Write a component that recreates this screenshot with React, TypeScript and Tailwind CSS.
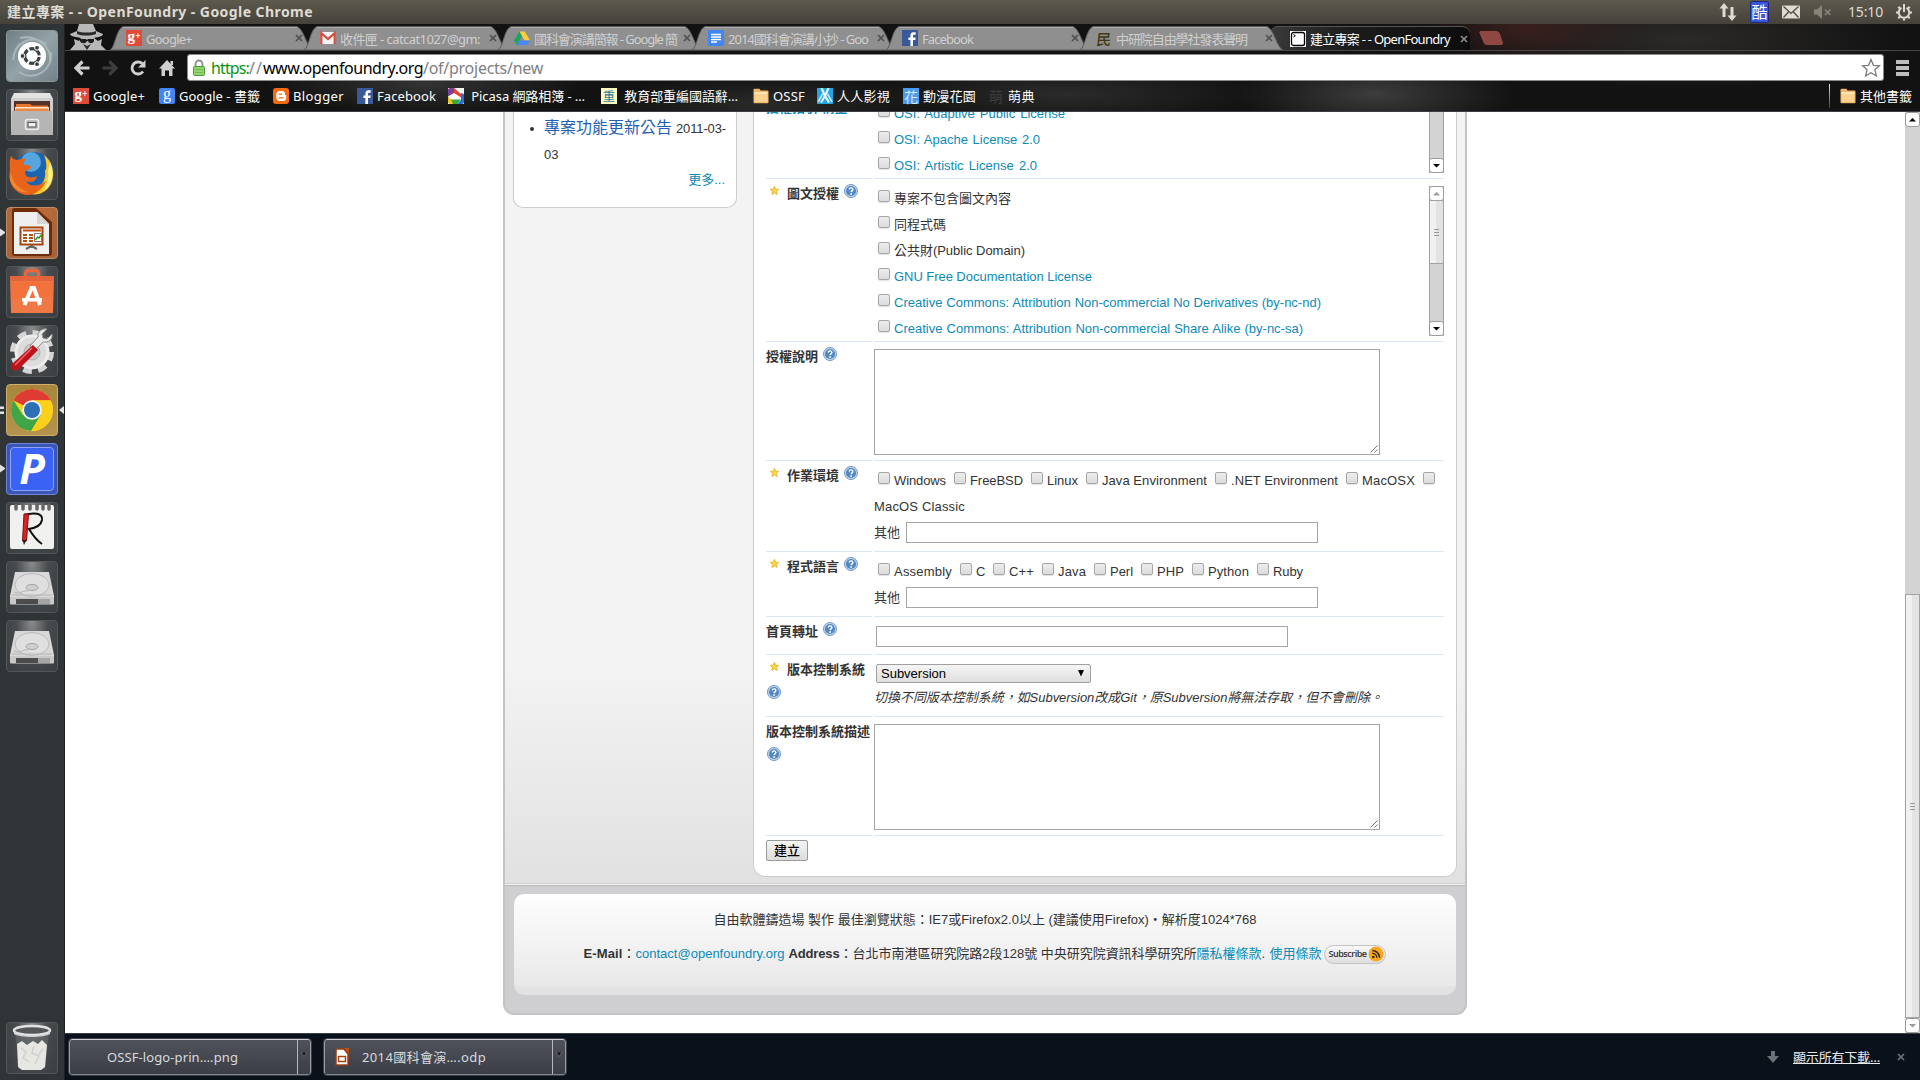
import { useLayoutEffect, useRef, type ReactNode } from 'react'

/* Text run tracked so that it fills a fixed measure. */
function Fit({ w, className = '', words = false, children }: { w: number; className?: string; words?: boolean; children: string }) {
  const ref = useRef<HTMLSpanElement>(null)
  useLayoutEffect(() => {
    const el = ref.current
    if (!el) return
    el.style.letterSpacing = '0px'
    el.style.wordSpacing = '0px'
    const diff = w - el.getBoundingClientRect().width
    const spaces = children.split(' ').length - 1
    if (words && spaces > 0) el.style.wordSpacing = `${diff / spaces}px`
    else el.style.letterSpacing = `${diff / children.length}px`
  }, [w, words, children])
  return (
    <span ref={ref} className={`inline-block whitespace-pre ${className}`}>
      {children}
    </span>
  )
}

/* ---------- small icons ---------- */

const GPlus = () => (
  <span className="flex h-4 w-4 shrink-0 items-center justify-center bg-[#dd4b39] font-['Liberation_Serif',serif] text-[15px] leading-none font-bold text-white">
    <span className="-mt-1">g</span>
    <span className="-mt-1 text-[10px]">+</span>
  </span>
)
const GBlue = () => (
  <span className="flex h-4 w-4 shrink-0 items-center justify-center rounded-[2px] bg-[#4285f4] font-['Liberation_Serif',serif] text-[16px] leading-none text-white">
    <span className="-mt-1">g</span>
  </span>
)
const Gmail = () => (
  <svg viewBox="0 0 16 16" className="h-4 w-4 shrink-0">
    <rect x="0.5" y="2" width="15" height="12" rx="1" fill="#f4f4f4" />
    <path d="M1.3 14V3.2L8 9l6.7-5.8V14" fill="none" stroke="#d54b3d" strokeWidth="2.2" />
  </svg>
)
const Drive = () => (
  <svg viewBox="0 0 16 16" className="h-4 w-4 shrink-0">
    <path d="M5.3 1.5h5.4L16 10.5h-5.4z" fill="#ffcf3f" />
    <path d="M5.3 1.5L8 6 2.7 15 0 10.5z" fill="#1da362" />
    <path d="M5.4 10.5H16L13.3 15H2.7z" fill="#4688f4" />
  </svg>
)
const Docs = () => (
  <svg viewBox="0 0 16 16" className="h-4 w-4 shrink-0">
    <rect width="16" height="16" rx="1" fill="#4285f4" />
    <path d="M3 4.5h10M3 7h10M3 9.500h10M3 12h6" stroke="#fff" strokeWidth="1.3" />
  </svg>
)
const Fb = () => (
  <svg viewBox="0 0 16 16" className="h-4 w-4 shrink-0">
    <rect width="16" height="16" fill="#3b5998" />
    <path d="M11 16V10h2.300l.4-2.500H11V6c0-.9.4-1.300 1.300-1.300h1.400V2.300h-2C9.500 2.300 8.400 3.500 8.400 5.600v1.900H6.400V10h2v6z" fill="#fff" />
  </svg>
)
const Min = () => (
  <span className="flex h-4 w-4 shrink-0 -skew-x-6 items-center justify-center font-['Noto_Sans_CJK_TC',sans-serif] text-[15px] leading-none font-medium text-[#3f3a12]">民</span>
)
const Foundry = () => (
  <svg viewBox="0 0 16 16" className="h-4 w-4 shrink-0">
    <rect width="16" height="16" fill="#fff" />
    <rect x="1.500" y="1.500" width="13" height="13" rx="2" fill="#fff" stroke="#000" strokeWidth="1.300" />
    <path d="M3.500 3.500l1.800 1.300L3.500 6" fill="none" stroke="#000" />
  </svg>
)
const Blogger = () => (
  <svg viewBox="0 0 16 16" className="h-4 w-4 shrink-0">
    <rect width="16" height="16" rx="3" fill="#f96a0e" />
    <path d="M6.300 3h3c1.500 0 2.700 1.200 2.700 2.700v.8c0 .5.400.7.9.7.300 0 .4.300.4.700v1.900c0 1.800-1.300 3.200-3 3.200h-4c-1.700 0-3-1.400-3-3.200V6.200C3.300 4.400 4.600 3 6.300 3z" fill="#fff" />
    <path d="M6.300 6.200h2.200M6.300 9.900h3.700" stroke="#f96a0e" strokeWidth="1.300" strokeLinecap="round" />
  </svg>
)
const Picasa = () => (
  <svg viewBox="0 0 16 16" className="h-4 w-4 shrink-0">
    <rect width="16" height="16" fill="#fff" />
    <path d="M6 0v5L0 8.500V2a2 2 0 012-2z" fill="#7d3f98" />
    <path d="M6 0l7 6v3.500L6 5z" fill="#e8432e" />
    <path d="M16 6v8a2 2 0 01-2 2H9.500L13 12V5z" fill="#2a6fd6" />
    <path d="M1.500 11.500H13L9.500 16H4z" fill="#3aa63f" />
    <path d="M0 8.500l3 3L5 16H2a2 2 0 01-2-2z" fill="#f6c21c" />
  </svg>
)
const Chong = () => (
  <span className="flex h-4 w-4 shrink-0 items-center justify-center bg-[#fbf8c4] font-['Noto_Sans_CJK_TC',sans-serif] text-[12px] leading-none text-[#1b7a9a]">重</span>
)
const Folder = () => (
  <svg viewBox="0 0 16 16" className="h-4 w-4 shrink-0">
    <path d="M0.500 1.800a1 1 0 011-1h5l1 1.700h7a1 1 0 011 1v10.700a1 1 0 01-1 1h-13a1 1 0 01-1-1z" fill="#f0b565" />
    <path d="M1.500 4h13v10.200h-13z" fill="#fbd28f" />
    <path d="M1.500 4h13v2h-13z" fill="#fde3b5" />
  </svg>
)
const Ren = () => (
  <svg viewBox="0 0 16 16" className="h-4 w-4 shrink-0">
    <rect width="16" height="16" fill="#23a5e0" />
    <path d="M4.500 0L8 8 4 14.500M11.500 0L8 8l4 6.500" fill="none" stroke="#e4f6ff" strokeWidth="2.200" />
    <path d="M5.500 6L1 14M10.500 6L15 14" fill="none" stroke="#bfe8fb" strokeWidth="1.600" />
  </svg>
)
const Hua = () => (
  <span className="flex h-4 w-4 shrink-0 items-center justify-center bg-[#4a9af0] font-['Noto_Sans_CJK_TC',sans-serif] text-[14px] leading-none text-[#d5ecff]">花</span>
)
const Meng = () => (
  <span className="flex h-4 w-4 shrink-0 items-center justify-center font-['Noto_Sans_CJK_TC',sans-serif] text-[14px] leading-none text-[#3d3d3d]">萌</span>
)

/* ---------- system bar ---------- */

function TitleBar() {
  return (
    <header className="flex h-6 w-full shrink-0 items-center bg-linear-to-b from-[#5d594d] to-[#44423b] pl-[7px] text-[#dfdbd2]">
      <Fit w={306} className="text-[14px] leading-6 font-bold">建立專案 - - OpenFoundry - Google Chrome</Fit>
      <div className="ml-auto flex h-6 items-center">
        <svg viewBox="0 0 18 20" className="h-5 w-[18px]" fill="#dfdbd2">
          <path d="M5 1l4.500 5.500h-3V15h-3V6.500h-3zM13 19l-4.500-5.500h3V5h3v8.500h3z" />
        </svg>
        <span className="ml-[13px] flex h-[22px] w-[19px] items-center justify-center rounded-[2px] border border-[#1c2b80] bg-[#3c55d6] text-[16px] leading-none text-white">酷</span>
        <svg viewBox="0 0 18 14" className="ml-[13px] h-[14px] w-[18px]">
          <rect y="0.500" width="18" height="13" rx="1" fill="#dfdbd2" />
          <path d="M1.500 1.500L9 8.500l7.500-7M1.500 12.500L6.500 7M16.500 12.500L11.500 7" fill="none" stroke="#4b483f" strokeWidth="1.200" />
        </svg>
        <svg viewBox="0 0 18 14" className="ml-[14px] h-[14px] w-[18px]">
          <path d="M0 4.500h3L8 0v14L3 9.500H0z" fill="#87847a" />
          <path d="M11 4.500l5.500 5.500M16.500 4.500L11 10" stroke="#87847a" strokeWidth="1.700" />
        </svg>
        <Fit w={35} className="ml-[16px] text-[14px] leading-6">15:10</Fit>
        <svg viewBox="0 0 18 18" className="mr-[7px] ml-[12px] h-[18px] w-[18px]" fill="none" stroke="#dfdbd2">
          <path d="M6.500 4.800a5.300 5.300 0 105 0" strokeWidth="2" />
          <path d="M9 1v8" strokeWidth="2" />
          <path d="M1 9.500h2M15 9.500h2M3.300 3.800l1.500 1.500M14.700 3.800l-1.500 1.500M3.300 15.200l1.500-1.500M14.700 15.200l-1.500-1.500M9 15.500v2" strokeWidth="2.200" />
        </svg>
      </div>
    </header>
  )
}

/* ---------- launcher ---------- */

const tileBase = 'relative flex h-[52px] w-[52px] shrink-0 items-center justify-center rounded-[4px] border overflow-hidden '
const tileDark = tileBase + 'border-[#545759] bg-[radial-gradient(ellipse_at_50%_0%,#8a8c8d_0%,#484b4d_45%,#3a3e40_100%)]'

function Disk() {
  return (
    <svg viewBox="0 0 52 52" className="h-[52px] w-[52px] shrink-0">
      <path d="M9 11h34l5 24v3H4v-3z" fill="#d8d8d8" />
      <path d="M4 36h44v6.500a1 1 0 01-1 1H5a1 1 0 01-1-1z" fill="#c9c9c9" />
      <path d="M10 38h32v5H10z" fill="#4c4c4c" />
      <path d="M32 38h12v5H32z" fill="#a5a5a5" />
      <ellipse cx="26" cy="24" rx="17" ry="11.500" fill="#dfdfdf" stroke="#b9b9b9" strokeWidth="1" />
      <ellipse cx="26" cy="26.500" rx="6" ry="3" fill="#cfcfcf" stroke="#a2a2a2" strokeWidth="1" />
      <path d="M8 31c6 3 8-2 14-1M6 34h40" fill="none" stroke="#b5b5b5" strokeWidth="1" />
    </svg>
  )
}

function Launcher() {
  return (
    <nav className="relative flex w-[65px] shrink-0 flex-col items-start gap-[7px] border-r border-[#1d2123] bg-[#2f3537] pt-[6px] pl-[6px]">
      <div className={tileBase + 'border-[#8b989c] bg-[linear-gradient(135deg,#6f7f86,#94a3a8_50%,#72828a)]'}>
        <svg viewBox="0 0 52 52" className="h-[52px] w-[52px] shrink-0" fill="none">
          <path d="M7 30C8 12 26 4 40 14M45 22c2 18-16 30-32 20M14 8c16-4 32 8 30 24" stroke="#a9b6ba" strokeWidth="2" />
          <circle cx="26" cy="26" r="14" fill="#fff" />
          <circle cx="26" cy="26" r="7.300" stroke="#3b4347" strokeWidth="3.200" strokeDasharray="13.300 2" strokeDashoffset="-1" />
          <circle cx="16.500" cy="26" r="2.400" fill="#3b4347" stroke="#fff" />
          <circle cx="31" cy="17.800" r="2.400" fill="#3b4347" stroke="#fff" />
          <circle cx="31" cy="34.200" r="2.400" fill="#3b4347" stroke="#fff" />
        </svg>
      </div>
      <div className={tileDark}>
        <svg viewBox="0 0 52 52" className="h-[52px] w-[52px] shrink-0">
          <path d="M8 4h36l3 6v8H5v-8z" fill="#e3e3e3" />
          <path d="M5 9h42v34H5z" fill="#cfcfcf" />
          <path d="M8 12h36v12H8z" fill="#51332a" />
          <path d="M10 15h14l2 1.500h16V22H10z" fill="#e8762d" />
          <path d="M9 18h34v4H9z" fill="#fbe3cd" />
          <path d="M9.500 19.500h33V23h-33z" fill="#ee8640" />
          <path d="M6 22h40l1 24H5z" fill="#b5b5b5" />
          <rect x="19.500" y="30.500" width="13" height="10" rx="2" fill="#b5b5b5" stroke="#ececec" strokeWidth="1.500" />
          <rect x="22" y="33.500" width="8" height="4.500" fill="#eee" stroke="#555" />
        </svg>
      </div>
      <div className={tileDark}>
        <svg viewBox="0 0 52 52" className="h-[52px] w-[52px] shrink-0">
          <circle cx="27" cy="25" r="21" fill="#1e63ae" />
          <circle cx="25" cy="14" r="10" fill="#55a5df" />
          <path d="M38 7c12 9 12 29 1 36-6 5-16 4-20 1 14-2 22-10 20-22 2 1 2-8-1-15z" fill="#f8c62d" />
          <path d="M44 14c5 12 2 23-6 29 3-8 5-14 4-20z" fill="#fdf08a" />
          <path d="M5 8c2 3 4 4 7 4 3-1 6-2 8-1-2 2-3 4-2 6 3 0 6 0 7 2-1 3-5 3-6 5 0 5 5 7 12 4-1 7-9 7-11 5 3 6 12 6 20 0-3 8-11 14-19 14C10 46 1 36 4 22c0-5-1-9 1-14z" fill="#e8641b" />
          <path d="M5 24c1 10 7 17 17 20-8 2-17-5-18-14z" fill="#f58a2c" />
        </svg>
      </div>
      <div className={tileBase + 'border-[#c08a66] bg-[linear-gradient(180deg,#b06a3c,#a4633b)]'}>
        <svg viewBox="0 0 52 52" className="h-[52px] w-[52px] shrink-0">
          <path d="M6 4a3 3 0 013-3h25l12 14v31a3 3 0 01-3 3H9a3 3 0 01-3-3z" fill="#702b08" />
          <path d="M30 1h16v14z" fill="#b8693a" />
          <path d="M8 5h23l12 12v30H8z" fill="#efefef" />
          <path d="M31 5l12 12H31z" fill="#d5d5d5" />
          <rect x="14.500" y="20.500" width="22" height="17" fill="#fff" stroke="#a5440f" strokeWidth="2" />
          <path d="M17 23.500h18M17 28h4M23 28h4M17 31h4M23 31h4M17 34h4M23 34h4" stroke="#b84e14" strokeWidth="2" />
          <path d="M28.500 26.500h7v8h-7z" fill="#fff" stroke="#777" />
          <path d="M29.500 33l2-3 1.500 1 2-3" fill="none" stroke="#22a01c" strokeWidth="1.500" />
          <path d="M25.500 38v3M20 42l5.500-3 5.500 3" fill="none" stroke="#666" strokeWidth="2" />
        </svg>
      </div>
      <div className={tileDark}>
        <svg viewBox="0 0 52 52" className="h-[52px] w-[52px] shrink-0">
          <path d="M4 10h44l-1 37H5z" fill="#f07746" />
          <path d="M4 10h44v5H4z" fill="#e2643a" />
          <path d="M19.500 14V7.500a3 3 0 013-3h7a3 3 0 013 3V14" fill="none" stroke="#e8663a" strokeWidth="3.500" />
          <path d="M5 16h42l-0.500 14C34 32 16 30 5 34z" fill="#f3713a" />
          <path d="M18.500 39l7-17h2.500l6 17" fill="none" stroke="#fff" strokeWidth="4" />
          <path d="M16 33.800h20" stroke="#fff" strokeWidth="3.400" />
        </svg>
      </div>
      <div className={tileDark}>
        <svg viewBox="0 0 52 52" className="h-[52px] w-[52px] shrink-0">
          <circle cx="26" cy="27" r="19.500" fill="none" stroke="#d5d5d5" strokeWidth="5" strokeDasharray="8.800 6.515" />
          <circle cx="26" cy="27" r="16" fill="#dcdcdc" stroke="#ededed" strokeWidth="3" />
          <circle cx="26" cy="27" r="8" fill="#c9c9c9" stroke="#b0b0b0" />
          <path d="M46 9l-5 5-4-1-1-4 5-5c-5-1-10 3-9 8l-8 9 5 4 8-8c6 1 10-3 9-8z" fill="#e8e8e8" stroke="#8b8b8b" />
          <path d="M27 20l5 5L12 45c-4 2-8-2-6-6z" fill="#c1121c" />
          <path d="M26 23L9 40" stroke="#ee6a6f" strokeWidth="1.500" />
        </svg>
      </div>
      <div className={tileBase + 'border-[#cdaf6b] bg-[linear-gradient(180deg,#a8853d,#b4934e)]'}>
        <svg viewBox="0 0 52 52" className="h-[52px] w-[52px] shrink-0">
          <circle cx="26" cy="26" r="21" fill="#ffd21f" />
          <path d="M26 26L7.500 16.200A21 21 0 0144.600 16.200H26z" fill="#dd3b33" />
          <path d="M16.900 30.900L7.500 16.200a21 21 0 0017.700 30.800L34.800 30.900z" fill="#3fa648" />
          <path d="M26 16.500h18.600A21 21 0 0125.200 47l9.600-16.100z" fill="#fdd01c" />
          <circle cx="26" cy="26" r="9.800" fill="#f3f3f3" />
          <circle cx="26" cy="26" r="8" fill="#2d6fb5" />
        </svg>
      </div>
      <div className={tileBase + 'border-[#6f83d8] bg-[#3c56b8]'}>
        <div className="flex h-[44px] w-[44px] items-center justify-center rounded-[4px] border border-[#8ea4ff] bg-[#3a63f5] font-['Open_Sans',sans-serif] text-[42px] leading-none font-bold text-white italic">
          <span className="-mt-[2px] block">P</span>
        </div>
      </div>
      <div className={tileDark}>
        <svg viewBox="0 0 52 52" className="h-[52px] w-[52px] shrink-0">
          <rect x="4" y="3" width="44" height="44" rx="2" fill="#f0f0ee" />
          <path d="M10 3v4M17 3v4M24 3v4M31 3v4M37 3v4M43 3v4" stroke="#666" strokeWidth="3.500" strokeLinecap="round" />
          <path d="M18 13c10-3 19-2 18 5-1 6-7 8-13 9 3 5 7 11 13 15" fill="none" stroke="#111" strokeWidth="2" />
          <path d="M18 12h4.500l-2 27h-4z" fill="#d92222" stroke="#7b0f0f" />
          <path d="M16.500 38h4l-2.500 5z" fill="#222" />
        </svg>
      </div>
      <div className={tileDark}><Disk /></div>
      <div className={tileDark}><Disk /></div>
      <div className={tileDark + ' mt-auto mb-[6px]'}>
        <svg viewBox="0 0 52 52" className="h-[52px] w-[52px] shrink-0">
          <path d="M9 9h34l-4 38H13z" fill="#63676a" opacity=".7" />
          <path d="M11 22l5-3 5 4 6-4 5 3 4-4 5 5-2 22-4 3H16l-4-3z" fill="#e6e6e3" />
          <path d="M15 26l5 4-3 6 6 4M28 24l-2 7 7 3-4 8M37 27l-4 5" fill="none" stroke="#d0d0cc" strokeWidth="1.500" />
          <ellipse cx="26" cy="8.500" rx="18" ry="4.500" fill="#54585a" stroke="#e2e2e2" strokeWidth="2.500" />
          <path d="M8 10c6 5 30 5 36 0v2c-6 4-30 4-36 0z" fill="#cfcfcf" />
        </svg>
      </div>
      <svg viewBox="0 0 65 300" className="pointer-events-none absolute top-[178px] left-0 h-[300px] w-[65px]" fill="#e2e2e2">
        <path d="M0 26.500l5 3.500v1l-5 3.500zM0 262.500l5 3.500v1l-5 3.500zM64 204v8l-5-4z" />
        <path d="M0 204.500h4v2.500H0zM0 209.500h4v2.500H0z" />
      </svg>
    </nav>
  )
}

/* ---------- browser chrome ---------- */

const tabs: { icon: ReactNode; text: string; w: number }[] = [
  { icon: <GPlus />, text: 'Google+', w: 46 },
  { icon: <Gmail />, text: '收件匣 - catcat1027@gm:', w: 140 },
  { icon: <Drive />, text: '國科會演講簡報 - Google 簡', w: 143 },
  { icon: <Docs />, text: '2014國科會演講小抄 - Goo', w: 140 },
  { icon: <Fb />, text: 'Facebook', w: 51 },
  { icon: <Min />, text: '中研院自由學社發表聲明', w: 131 },
]

const Close = ({ c }: { c: string }) => (
  <svg viewBox="0 0 8 8" className="h-2 w-2 shrink-0" fill="none" stroke={c} strokeWidth="1.700">
    <path d="M1 1l6 6M7 1L1 7" />
  </svg>
)

function TabStrip() {
  return (
    <div className="flex h-[26px] items-end pl-[5px]">
      <svg viewBox="0 0 36 26" className="h-[26px] w-[36px] shrink-0">
        <path d="M9 0h14l3 7 7 3c0 2-4 3-9 4l4 3 4-2-1 6 5 5H0l5-6-1-5 5 2 2-3C5 13 0 12 0 10l7-3z" fill="#b8b8b8" />
        <path d="M7 7c5 2 14 2 19 0v3c-6 2-14 2-19 0z" fill="#2a2a2a" />
        <path d="M10 15h6l1 1 1-1h6v2c-1 3-5 3-6 0h-1c-1 3-6 3-7 0z" fill="#1c1c1c" />
        <path d="M13 20l4 6 4-6-4 2z" fill="#2a2a2a" />
      </svg>
      {tabs.map((t) => (
        <div key={t.text} className="relative flex h-[24px] w-[194px] shrink-0 items-center pl-[20px]">
          <svg viewBox="0 0 204 24" preserveAspectRatio="none" className="absolute top-0 left-[4px] h-[24px] w-[204px]">
            <path d="M0 24C5 22 6 3 13 0.500H187C194 3 197 22 203 24z" fill="#8f8f8f" stroke="#5a5a5a" />
            <path d="M13 1.500H187" stroke="#aaa" />
          </svg>
          <div className="relative flex w-full items-center">
            {t.icon}
            <div className="ml-[4px] w-[146px] shrink-0">
              <Fit w={t.w} className="text-[13px] leading-[20px] text-[#cfcfcf]">{t.text}</Fit>
            </div>
            <span className="ml-[3px]"><Close c="#4f4f4f" /></span>
          </div>
        </div>
      ))}
      <div className="flex h-[24px] w-[200px] shrink-0 items-center rounded-t-[8px] border-t border-[#555] bg-[linear-gradient(100deg,#3a3a3a,#1c1c1c_40%,#0c0c0c)] pl-[20px]">
        <Foundry />
        <Fit w={140} className="ml-[4px] text-[13px] leading-[20px] text-white">建立專案 - - OpenFoundry</Fit>
        <span className="ml-[10px]"><Close c="#8a8a8a" /></span>
      </div>
      <svg viewBox="0 0 26 16" className="mb-[4px] ml-[8px] h-4 w-[26px] shrink-0">
        <path d="M3 1h15c2 0 3 1 4 3l3 9c0 1-0.500 2-2 2H9c-2 0-3-1-3.500-2.500L1.500 3C1 2 1.500 1 3 1z" fill="#8f4841" />
      </svg>
    </div>
  )
}

function Toolbar() {
  return (
    <div className="flex h-[33px] items-center border-t border-[#4a4748] pt-[1px]">
      <div className="flex w-[122px] items-center gap-[10px] pl-[8px]">
        <svg viewBox="0 0 18 18" className="h-[18px] w-[18px]" fill="none" stroke="#cfcfcf" strokeWidth="3.200">
          <path d="M16.500 9H4M9.500 2.500L3 9l6.500 6.500" />
        </svg>
        <svg viewBox="0 0 18 18" className="h-[18px] w-[18px]" fill="none" stroke="#3d3d3d" strokeWidth="3.200">
          <path d="M1.500 9H14M8.500 2.500L15 9l-6.500 6.500" />
        </svg>
        <svg viewBox="0 0 18 18" className="h-[18px] w-[18px]">
          <path d="M14 12.500A6 6 0 119 3c2 0 3.300.6 4.500 1.800" fill="none" stroke="#cfcfcf" strokeWidth="2.800" />
          <path d="M16.500 1v7.500H9z" fill="#cfcfcf" />
        </svg>
        <svg viewBox="0 0 18 18" className="ml-[1px] h-[18px] w-[18px]" fill="#cfcfcf">
          <path d="M9 1l8 8.500h-2.500V17H11v-5.500H7V17H3.500V9.500H1z" />
          <path d="M12.500 2H15v4h-2.500z" />
        </svg>
      </div>
      <div className="flex h-[27px] w-[1697px] items-center rounded-[3px] border border-[#8b8b8b] bg-white pl-[5px]">
        <svg viewBox="0 0 12 18" className="h-[18px] w-3">
          <path d="M2.500 8V5a3.500 3.500 0 017 0v3" fill="none" stroke="#8d8d8d" strokeWidth="1.800" />
          <rect x="0.500" y="7.500" width="11" height="9" rx="1" fill="#8fd46d" stroke="#4f9a38" />
          <path d="M2 10.500h8M2 13.500h8" stroke="#6fbd4c" />
        </svg>
        <div className="ml-[6px] flex text-[16px] leading-[24px]">
          <Fit w={38} className="text-[#0d9410]">https:</Fit>
          <Fit w={14} className="text-[#808080]">//</Fit>
          <Fit w={160} className="text-black">www.openfoundry.org</Fit>
          <Fit w={120} className="text-[#808080]">/of/projects/new</Fit>
        </div>
        <svg viewBox="0 0 20 20" className="mr-[2px] ml-auto h-5 w-5">
          <path d="M10 1.500l2.500 5.800 6 .5-4.600 4 1.500 6.200L10 14.700 4.600 18l1.500-6.200-4.600-4 6-.5z" fill="#fff" stroke="#7b7b7b" strokeWidth="1.300" />
        </svg>
      </div>
      <div className="ml-[12px] flex w-[13px] flex-col gap-[2px]">
        <span className="h-1 bg-[#bdbdbd]" />
        <span className="h-1 bg-[#bdbdbd]" />
        <span className="h-1 bg-[#bdbdbd]" />
      </div>
    </div>
  )
}

function Bookmark({ icon, gap, w, children }: { icon: ReactNode; gap: string; w: number; children: string }) {
  return (
    <div className={`flex shrink-0 items-center ${gap}`}>
      {icon}
      <Fit w={w} className="ml-[4px] text-[13px] leading-[20px] text-white">{children}</Fit>
    </div>
  )
}

function Bookmarks() {
  return (
    <div className="flex h-[29px] items-center border-b border-[#3d3d45] pb-[2px] pl-[8px]">
      <Bookmark icon={<GPlus />} gap="mr-[14px]" w={52}>Google+</Bookmark>
      <Bookmark icon={<GBlue />} gap="mr-[13px]" w={81}>Google - 書籤</Bookmark>
      <Bookmark icon={<Blogger />} gap="mr-[13px]" w={51}>Blogger</Bookmark>
      <Bookmark icon={<Fb />} gap="mr-[12px]" w={59}>Facebook</Bookmark>
      <Bookmark icon={<Picasa />} gap="mr-[16px]" w={117}>{' Picasa 網路相簿 - …'}</Bookmark>
      <Bookmark icon={<Chong />} gap="mr-[15px]" w={117}>{' 教育部重編國語辭…'}</Bookmark>
      <Bookmark icon={<Folder />} gap="mr-[12px]" w={32}>OSSF</Bookmark>
      <Bookmark icon={<Ren />} gap="mr-[13px]" w={53}>人人影視</Bookmark>
      <Bookmark icon={<Hua />} gap="mr-[12px]" w={53}>動漫花園</Bookmark>
      <Bookmark icon={<Meng />} gap="" w={27}>萌典</Bookmark>
      <div className="mr-[10px] ml-auto h-[24px] w-px bg-linear-to-b from-[#e5e9ff] to-[#2f4370]" />
      <Bookmark icon={<Folder />} gap="mr-[8px]" w={52}>其他書籤</Bookmark>
    </div>
  )
}

/* ---------- page ---------- */

const Check = ({ className = '' }: { className?: string }) => (
  <span className={`inline-block h-3 w-3 shrink-0 rounded-[2px] border border-[#a6a6a6] bg-linear-to-b from-[#ededed] to-[#dcdcdc] shadow-[0_1px_1px_#e2e2e2] ${className}`} />
)

const Star = () => (
  <svg viewBox="0 0 9 9" className="mt-[-7px] mr-[8px] ml-[4px] h-[9px] w-[9px] shrink-0">
    <path d="M4.500 0.300l1.200 2.900 3 .2-2.300 1.900.8 3.200-2.700-1.700-2.700 1.700.8-3.200L0.300 3.400l3-.2z" fill="#ffd83a" stroke="#e0a21c" strokeWidth=".7" />
  </svg>
)

const Help = ({ className = '' }: { className?: string }) => (
  <svg viewBox="0 0 14 14" className={`h-[14px] w-[14px] shrink-0 ${className}`}>
    <circle cx="7" cy="7" r="6.500" fill="#c9daee" stroke="#5f8cc0" strokeWidth=".9" />
    <circle cx="7" cy="7" r="5.100" fill="#5488c4" />
    <path d="M5.200 5.500c0-2.200 3.700-2.200 3.700 0 0 1.300-1.700 1.300-1.800 2.600" fill="none" stroke="#fff" strokeWidth="1.400" />
    <circle cx="7.100" cy="10" r=".9" fill="#fff" />
  </svg>
)

function Row({ h, label, star, help = 'side', children }: { h: string; label: string; star?: boolean; help?: 'side' | 'below'; children: ReactNode }) {
  return (
    <div className={`flex gap-[2px] ${h}`}>
      <div className="w-[106px] shrink-0 border-b border-[#dbe7f9] pt-[5px]">
        <div className="flex h-[20px] items-center">
          {star && <Star />}
          <span className="text-[13px] leading-[20px] font-bold whitespace-nowrap">{label}</span>
          {help === 'side' && <Help className="mt-[-7px] ml-[5px]" />}
        </div>
        {help === 'below' && <Help className="mt-[5px] ml-[1px]" />}
      </div>
      <div className="w-[570px] border-b border-[#dbe7f9] pt-[7px]">{children}</div>
    </div>
  )
}

function License({ link = true, w, children }: { link?: boolean; w: number; children: string }) {
  return (
    <div className="flex h-[26px] items-center pl-[4px]">
      <Check className="mt-[-6px]" />
      <Fit w={w} words={link} className={link ? 'ml-[4px] leading-[26px] text-[#0d8ab8]' : 'ml-[4px] leading-[26px]'}>{children}</Fit>
    </div>
  )
}

const Arrow = ({ up, dim }: { up?: boolean; dim?: boolean }) => (
  <svg viewBox="0 0 15 15" className="h-[15px] w-[15px] shrink-0">
    <rect x=".5" y=".5" width="14" height="14" rx="2.500" fill="#fff" stroke="#9c9c9c" />
    <path d={up ? 'M4 9.500h7L7.500 6z' : 'M4 6h7L7.500 9.500z'} fill={dim ? '#9a9a9a' : '#000'} />
  </svg>
)

const Thumb = ({ h }: { h: string }) => (
  <div className={`flex w-[15px] shrink-0 flex-col items-center justify-center gap-[2px] border border-[#a2a2a2] bg-[linear-gradient(90deg,#f1f1f1_50%,#e3e3e3_50%)] ${h}`}>
    <span className="h-px w-[5px] bg-[#999]" />
    <span className="h-px w-[5px] bg-[#999]" />
    <span className="h-px w-[5px] bg-[#999]" />
  </div>
)

const TextArea = () => (
  <div className="relative h-[106px] w-[506px] border border-[#a5a5a5] bg-white">
    <svg viewBox="0 0 8 8" className="absolute right-px bottom-px h-2 w-2" stroke="#555" strokeWidth=".8">
      <path d="M0.500 7.500l7-7M4.500 7.500l3-3" />
    </svg>
  </div>
)

const Other = () => (
  <div className="flex h-[26px] items-center">
    <span className="mt-[-1px]">其他</span>
    <Field className="mt-[-1px] ml-[6px]" />
  </div>
)

const Field = ({ className = '' }: { className?: string }) => <div className={`h-[21px] w-[412px] shrink-0 border border-[#a5a5a5] bg-white ${className}`} />

function Options({ items }: { items: [string, number, number][] }) {
  return (
    <div className="flex h-[26px] items-center pl-[4px]">
      {items.map(([name, w, adv], i) => (
        <div key={i} className="flex shrink-0 items-center" style={{ width: adv }}>
          <Check className="mt-[-6px]" />
          {name && <Fit w={w} className="ml-[4px] leading-[26px]">{name}</Fit>}
        </div>
      ))}
    </div>
  )
}

function Page() {
  return (
    <div className="flex h-[921px] justify-start overflow-hidden bg-white font-['Liberation_Sans','Noto_Sans_CJK_TC',sans-serif] text-[13px] text-[#333]">
      <div className="ml-[438px] flex h-[903px] w-[964px] flex-col overflow-hidden rounded-b-[11px] border-x-2 border-b-2 border-[#c4c4c6] bg-[#cfcfd1]">
        <div className="flex h-[771px] shrink-0 bg-[linear-gradient(180deg,#f3f3f3_0%,#f3f3f3_72%,#e1e1e1_100%)]">
          <aside className="ml-[8px] flex h-[96px] w-[224px] shrink-0 flex-col rounded-b-[10px] border border-t-0 border-[#cdcdcd] bg-white">
            <div className="mt-[3px] flex h-[26px] items-center pl-[16px]">
              <span className="mt-[2px] mr-[10px] h-1 w-1 rounded-full bg-[#333]" />
              <Fit w={128} className="text-[16px] leading-[26px] text-[#2360b4]">專案功能更新公告</Fit>
              <Fit w={50} className="mt-[1px] ml-[4px] leading-[26px]">2011-03-</Fit>
            </div>
            <div className="mt-[1px] h-[25px] pl-[30px] leading-[26px]">03</div>
            <div className="h-[26px] pr-[11px] text-right leading-[26px] text-[#0d8ab8]">更多...</div>
          </aside>
          <main className="ml-[16px] h-[765px] w-[704px] shrink-0 rounded-b-[12px] border border-t-0 border-[#cdcdcd] bg-white pl-[12px]">
            <div className="flex h-[67px] gap-[2px] overflow-hidden">
              <div className="w-[106px] border-b border-[#dbe7f9]">
                <div className="mt-[-14px] h-[20px] text-[13px] leading-[20px] font-bold text-[#0d8ab8]">授權指引 精靈</div>
              </div>
              <div className="flex w-[570px] border-b border-[#dbe7f9]">
                <div className="mt-[-11px] flex-1">
                  <License w={171}>OSI: Adaptive Public License</License>
                  <License w={146}>OSI: Apache License 2.0</License>
                  <License w={143}>OSI: Artistic License 2.0</License>
                </div>
                <div className="flex h-[61px] w-[15px] flex-col border-x border-[#a2a2a2] bg-[#d3d3d3]">
                  <div className="-mx-px mt-auto"><Arrow /></div>
                </div>
              </div>
            </div>
            <Row h="h-[163px]" label="圖文授權" star>
              <div className="flex h-[150px]">
                <div className="h-[150px] flex-1 overflow-hidden">
                  <License link={false} w={117}>專案不包含圖文內容</License>
                  <License link={false} w={52}>同程式碼</License>
                  <License link={false} w={131}>公共財(Public Domain)</License>
                  <License w={198}>GNU Free Documentation License</License>
                  <License w={427}>Creative Commons: Attribution Non-commercial No Derivatives (by-nc-nd)</License>
                  <License w={409}>Creative Commons: Attribution Non-commercial Share Alike (by-nc-sa)</License>
                </div>
                <div className="flex h-[150px] w-[15px] flex-col border-x border-[#a2a2a2] bg-[#d3d3d3]">
                  <div className="-mx-px"><Arrow up dim /></div>
                  <div className="-mx-px -mt-px"><Thumb h="h-[64px]" /></div>
                  <div className="-mx-px mt-auto"><Arrow /></div>
                </div>
              </div>
            </Row>
            <Row h="h-[119px]" label="授權說明"><TextArea /></Row>
            <Row h="h-[91px]" label="作業環境" star>
              <Options items={[['Windows', 52, 76], ['FreeBSD', 53, 77], ['Linux', 31, 55], ['Java Environment', 105, 129], ['.NET Environment', 107, 131], ['MacOSX', 53, 77], ['', 0, 12]]} />
              <div className="h-[26px] leading-[26px]"><Fit w={91}>MacOS Classic</Fit></div>
              <Other />
            </Row>
            <Row h="h-[65px]" label="程式語言" star>
              <Options items={[['Assembly', 58, 82], ['C', 9, 33], ['C++', 25, 49], ['Java', 28, 52], ['Perl', 23, 47], ['PHP', 27, 51], ['Python', 41, 65], ['Ruby', 30, 50]]} />
              <Other />
            </Row>
            <Row h="h-[38px]" label="首頁轉址"><Field className="mt-[2px] ml-[2px]" /></Row>
            <Row h="h-[62px]" label="版本控制系統" star help="below">
              <div className="mt-[2px] ml-[2px] flex h-[19px] w-[215px] items-center rounded-[2px] border border-[#a0a0a0] bg-linear-to-b from-[#f5f5f5] to-[#dedede] pr-[5px] pl-[4px] text-black">
                <Fit w={65} className="leading-[17px]">Subversion</Fit>
                <svg viewBox="0 0 8 7" className="ml-auto h-[7px] w-2"><path d="M1 0h6L4 6.500z" /></svg>
              </div>
              <div className="mt-[2px] h-[26px] leading-[26px] italic"><Fit w={509}>切換不同版本控制系統，如Subversion改成Git，原Subversion將無法存取，但不會刪除。</Fit></div>
            </Row>
            <Row h="h-[119px]" label="版本控制系統描述" help="below"><TextArea /></Row>
            <div className="mt-[4px] flex h-[21px] w-[42px] items-center justify-center rounded-[2px] border border-[#9a9a9a] bg-linear-to-b from-[#f5f5f5] to-[#dcdcdc] font-medium text-black">建立</div>
          </main>
        </div>
        <div className="h-px shrink-0 bg-[#cfcfcf]" />
        <div className="h-px shrink-0 bg-[#f4f4f4]" />
        <div className="h-px shrink-0 bg-[#b9b9ba]" />
        <footer className="mt-[8px] ml-[9px] flex h-[101px] w-[942px] shrink-0 flex-col items-center rounded-[10px] bg-[linear-gradient(180deg,#fefefe,#e9e9e9_90%,#e2e2e2_93%)] pt-[13px]">
          <div className="h-[26px] leading-[26px]"><Fit w={543}>自由軟體鑄造場 製作 最佳瀏覽狀態：IE7或Firefox2.0以上 (建議使用Firefox)‧解析度1024*768</Fit></div>
          <div className="mt-[8px] flex h-[26px] items-center leading-[26px]">
            <Fit w={39} className="font-bold">E-Mail</Fit>
            <span>：</span>
            <Fit w={149} className="text-[#0d8ab8]">contact@openfoundry.org</Fit>
            <Fit w={51} className="ml-[4px] font-bold">Address</Fit>
            <span>：</span>
            <Fit w={344}>台北市南港區研究院路2段128號 中央研究院資訊科學研究所</Fit>
            <Fit w={65} className="text-[#0d8ab8]">隱私權條款</Fit>
            <span className="w-[8px]">.</span>
            <Fit w={52} className="text-[#0d8ab8]">使用條款</Fit>
            <span className="mr-[1px] ml-[2px] flex h-[19px] w-[62px] items-center rounded-full border border-[#c3c3c3] bg-linear-to-b from-[#f8f8f8] to-[#dedede] pl-[4px]">
              <Fit w={38} className="font-['Open_Sans',sans-serif] text-[9px] leading-[16px] font-semibold">Subscribe</Fit>
              <svg viewBox="0 0 16 16" className="ml-[1px] h-4 w-4 shrink-0">
                <circle cx="8" cy="8" r="7.500" fill="#f9a81d" />
                <circle cx="5.300" cy="11" r="1.300" fill="#3b2a10" />
                <path d="M4.300 7.300a4.500 4.500 0 014.500 4.500M4.300 4.500a7.300 7.300 0 017.300 7.300" fill="none" stroke="#3b2a10" strokeWidth="1.500" />
              </svg>
            </span>
          </div>
        </footer>
      </div>
      <div className="ml-auto flex h-[921px] w-[15px] flex-col bg-[#d3d3d3]">
        <Arrow up />
        <div className="mt-[467px]"><Thumb h="h-[424px]" /></div>
        <div className="mt-auto"><Arrow dim /></div>
      </div>
    </div>
  )
}

/* ---------- downloads ---------- */

function Download({ icon, w, pl, children }: { icon?: ReactNode; w: number; pl: string; children: string }) {
  return (
    <div className="mr-[13px] flex h-[36px] w-[242px] rounded-[3px] border border-[#cfd0d6] border-x-[#9a9ca4] border-b-[#85878f] bg-linear-to-b from-[#4f525b] to-[#3b3e47] outline outline-[#3a3e46]">
      <div className={`flex flex-1 items-center ${pl}`}>
        {icon}
        <Fit w={w} className="text-[13px] leading-[20px] text-[#d8dade]">{children}</Fit>
      </div>
      <div className="flex w-[13px] justify-center border-l border-[#b5b7bf] pt-[12px]">
        <svg viewBox="0 0 6 5" className="h-[5px] w-[6px]"><path d="M0 0h6L3 4.500z" fill="#111" stroke="#999" strokeWidth=".5" /></svg>
      </div>
    </div>
  )
}

function Downloads() {
  return (
    <div className="flex h-[47px] items-center border-t border-[#3a4048] bg-[#0a111b] pb-px pl-[4px]">
      <Download w={131} pl="pl-[37px]">OSSF-logo-prin….png</Download>
      <Download
        w={124}
        pl="pl-[10px]"
        icon={
          <svg viewBox="0 0 14 18" className="mr-[13px] h-[18px] w-[14px] shrink-0">
            <path d="M1 1h8l4 5v11H1z" fill="#fff" stroke="#9b3e10" strokeWidth="1.500" />
            <path d="M9 0h5v6z" fill="#b8501a" />
            <rect x="3.500" y="8.500" width="7" height="5" fill="#fff" stroke="#a5440f" strokeWidth="1.500" />
          </svg>
        }
      >
        2014國科會演….odp
      </Download>
      <div className="ml-auto flex items-center">
        <svg viewBox="0 0 12 12" className="h-3 w-3" fill="#6c7077"><path d="M4 0h4v5h4l-6 7-6-7h4z" /></svg>
        <Fit w={87} className="ml-[14px] text-[13px] leading-[20px] text-[#e8e8e8] underline">顯示所有下載…</Fit>
        <span className="mr-[15px] ml-[17px]"><Close c="#70747a" /></span>
      </div>
    </div>
  )
}

export default function App() {
  return (
    <div className="flex h-[1080px] w-[1920px] flex-col overflow-hidden bg-white font-['Noto_Sans','Noto_Sans_CJK_TC',sans-serif]">
      <TitleBar />
      <div className="flex h-[1056px]">
        <Launcher />
        <div className="w-[1855px] shrink-0">
          <div className="h-[88px] bg-[#121212] bg-[radial-gradient(ellipse_110px_40px_at_1460px_2px,#4a2320aa,transparent),radial-gradient(ellipse_140px_40px_at_1310px_70px,#3c3c3c,transparent),radial-gradient(ellipse_220px_50px_at_1620px_15px,#2c2a28,transparent),radial-gradient(ellipse_160px_30px_at_360px_60px,#333,transparent),radial-gradient(ellipse_200px_30px_at_1000px_70px,#2b2b2b,transparent),radial-gradient(ellipse_160px_30px_at_700px_80px,#2a2a2a,transparent)]">
            <TabStrip />
            <Toolbar />
            <Bookmarks />
          </div>
          <Page />
          <Downloads />
        </div>
      </div>
    </div>
  )
}
